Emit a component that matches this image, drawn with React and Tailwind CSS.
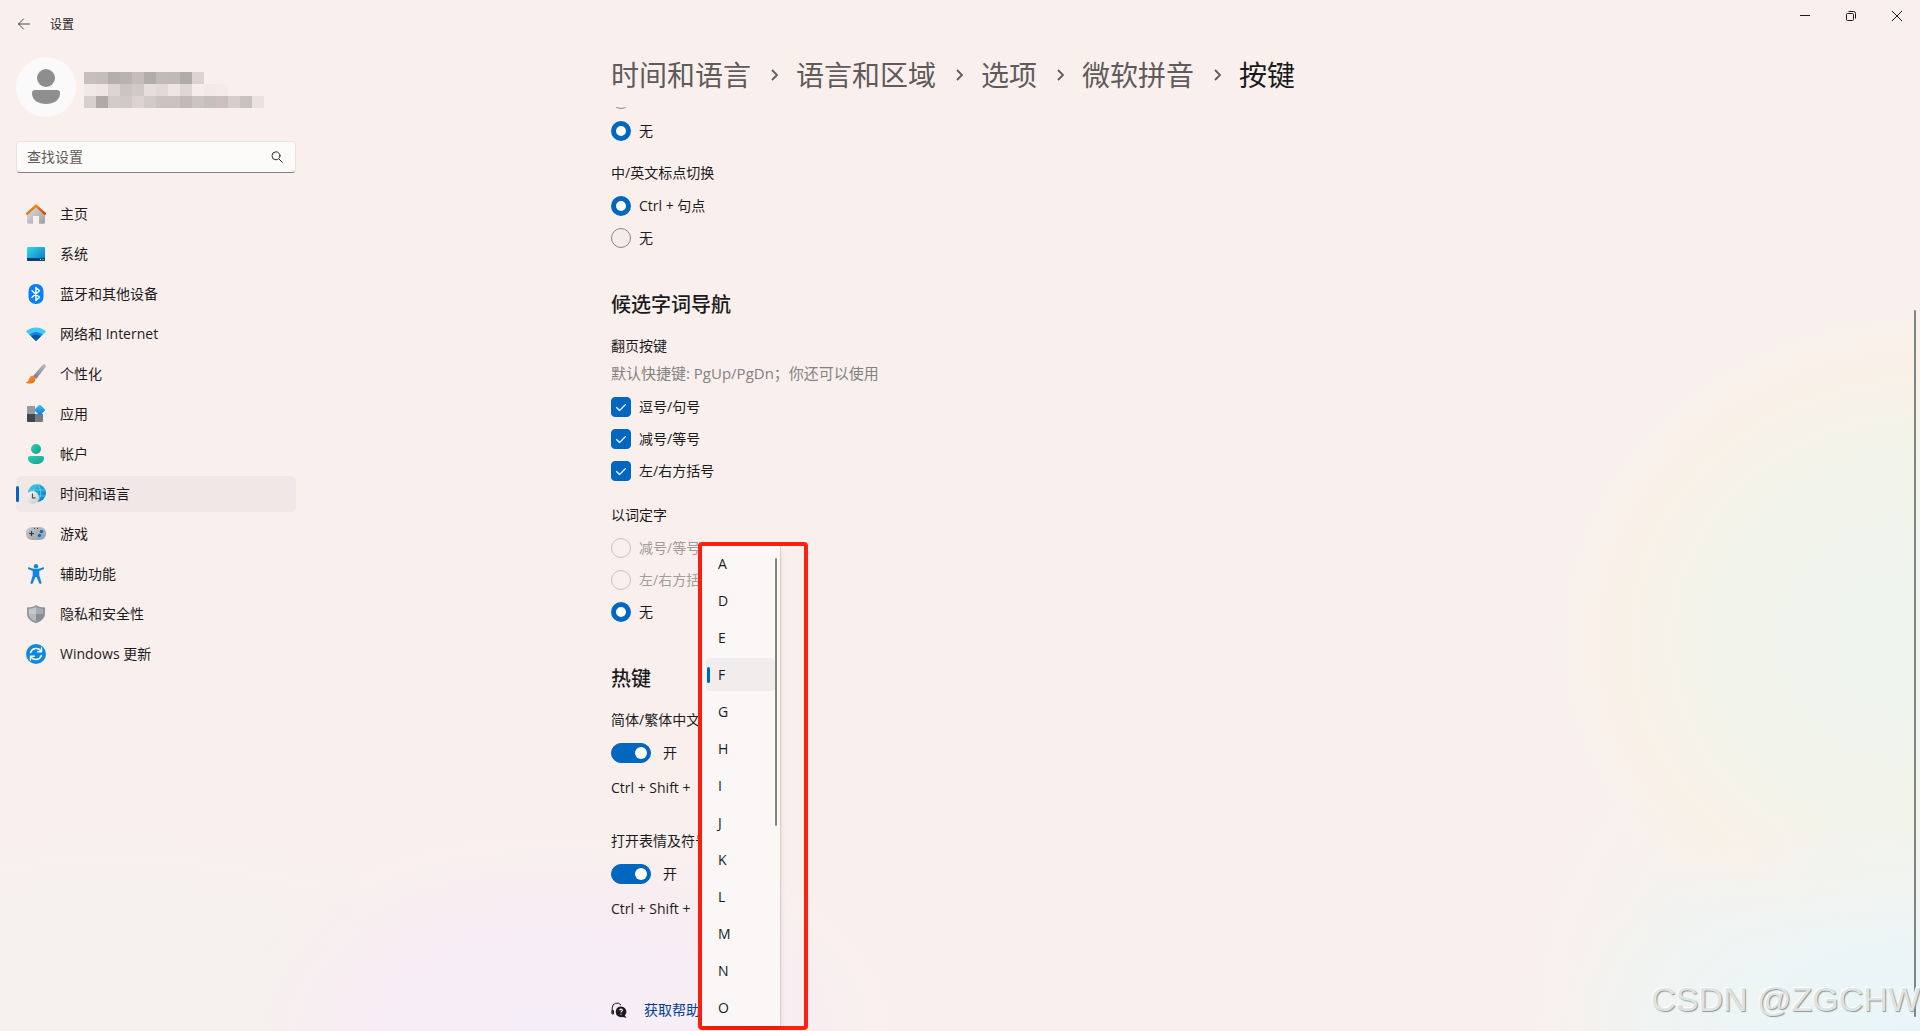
import clsx from 'clsx';

const crumbs = ['时间和语言', '语言和区域', '选项', '微软拼音'];
const keys = ['A', 'D', 'E', 'F', 'G', 'H', 'I', 'J', 'K', 'L', 'M', 'N', 'O'];

// blurred account name and mail, one row of tiles per line
const nameTiles = [
  ['#c8bebf', '#c5bcbc', '#b3afae', '#b8b3b1', '#c6bcbc', '#b1adab', '#c0bab8', '#bfb9b7', '#b0acaa', '#dcd2d2'],
  ['#f1e8e8', '#f0e5e5', '#ddd4d3', '#cbc4c3', '#d1c8c8', '#e7dddd', '#e3d9d9', '#efe4e4', '#e0d6d6', '#f6ecec', '#f3e9e9', '#f5ebeb'],
  ['#d8d0cf', '#afa9a7', '#d3caca', '#d1c8c8', '#dcd2d2', '#d2c9c9', '#ccc2c2', '#ccc2c2', '#c3b9b9', '#ccc4c3', '#c5c0be', '#cac0c0', '#d7cdcd', '#c7c1bf', '#ebe1e1'],
];

const HomeIcon = () => (
  <svg viewBox="0 0 20 20" className="w-5 h-5">
    <defs>
      <linearGradient id="homeBody" x1="0" y1="0" x2="1" y2="1"><stop stopColor="#e2e2e2" /><stop offset="1" stopColor="#9d9fa1" /></linearGradient>
      <linearGradient id="homeRoof" x1="0" y1="0" x2="1" y2="1"><stop stopColor="#f9a01b" /><stop offset="1" stopColor="#c9430c" /></linearGradient>
    </defs>
    <path d="M1 9 10 1.5 19 9v9.3c0 .9-.6 1.5-1.4 1.5H13V12H7v7.8H2.4c-.8 0-1.4-.6-1.4-1.5Z" fill="url(#homeBody)" />
    <path d="m1.2 9.6 8.8-8 8.8 8" fill="none" stroke="url(#homeRoof)" strokeWidth="2.4" strokeLinecap="round" strokeLinejoin="round" />
  </svg>
);

const SystemIcon = () => (
  <svg viewBox="0 0 20 20" className="w-5 h-5">
    <defs>
      <linearGradient id="screen" x1="0" y1="0" x2="1" y2="1"><stop stopColor="#35dbe9" /><stop offset="1" stopColor="#0a72c4" /></linearGradient>
    </defs>
    <rect x="1" y="3" width="18" height="14" rx="1" fill="url(#screen)" />
    <path d="M1 14h18v2a1 1 0 0 1-1 1H2a1 1 0 0 1-1-1Z" fill="#0b4468" />
    <path d="M14 15h1v1h-1zM16.5 15h1v1h-1z" fill="#b9dced" />
  </svg>
);

const BluetoothIcon = () => (
  <svg viewBox="0 0 20 20" className="w-5 h-5">
    <rect x="2.5" width="15" height="20" rx="7" fill="#0781fb" />
    <path d="m6 6.8 7.5 6.4-3.6 3.300v-13l3.600 3.300L6 13.200" fill="none" stroke="#fff" strokeWidth="1.4" strokeLinejoin="round" strokeLinecap="round" />
  </svg>
);

const NetworkIcon = () => (
  <svg viewBox="0 0 20 20" className="w-5 h-5">
    <path d="M10 17 0 7.500a14.500 14.500 0 0 1 20 0Z" fill="#3ccbf4" />
    <path d="M10 17 3.300 10.600a10 10 0 0 1 13.400 0Z" fill="#1683e0" />
    <path d="M10 17 5.200 12.400a7 7 0 0 1 9.600 0Z" fill="#0b55a4" />
  </svg>
);

const BrushIcon = () => (
  <svg viewBox="0 0 20 20" className="w-5 h-5">
    <defs>
      <linearGradient id="handle" x1="1" y1="0" x2="0" y2="1"><stop stopColor="#b9bec4" /><stop offset="1" stopColor="#737b84" /></linearGradient>
      <linearGradient id="bristle" x1="0" y1="0" x2="1" y2="1"><stop stopColor="#fca92d" /><stop offset="1" stopColor="#e85d13" /></linearGradient>
    </defs>
    <path d="M7 12 16.800.8c1.800-1.500 3.800.2 2.800 2.200L10.300 15Z" fill="url(#handle)" />
    <path d="M4.500 12.500c2-2 5.700.3 4.800 3.400C8.300 19.600 3.600 20.400.5 18.900c-.6-.3-.5-.8 0-.9C3 17.500 2.600 14.200 4.500 12.500Z" fill="url(#bristle)" />
  </svg>
);

const AppsIcon = () => (
  <svg viewBox="0 0 20 20" className="w-5 h-5">
    <defs>
      <linearGradient id="diamond" x1="0" y1="0" x2="1" y2="1"><stop stopColor="#3cc4f3" /><stop offset="1" stopColor="#0b78d0" /></linearGradient>
    </defs>
    <path d="M2 2h7v8H1V3a1 1 0 0 1 1-1Z" fill="#959ba3" />
    <path d="M1 10h8v8H2a1 1 0 0 1-1-1Z" fill="#43474c" />
    <path d="M9 10h8v7a1 1 0 0 1-1 1H9Z" fill="#747a82" />
    <rect x="9.8" y="2" width="8" height="8" rx="1" transform="rotate(45 13.8 6)" fill="url(#diamond)" />
  </svg>
);

const AccountIcon = () => (
  <svg viewBox="0 0 20 20" className="w-5 h-5">
    <defs>
      <linearGradient id="person" x1="0" y1="0" x2="1" y2="1"><stop stopColor="#2bcdb2" /><stop offset="1" stopColor="#12a38e" /></linearGradient>
    </defs>
    <circle cx="10" cy="5" r="5" fill="url(#person)" />
    <path d="M4 12h12a2 2 0 0 1 2 2c0 4-3.500 6-8 6s-8-2-8-6a2 2 0 0 1 2-2Z" fill="url(#person)" />
  </svg>
);

const TimeIcon = () => (
  <svg viewBox="0 0 20 20" className="w-5 h-5">
    <defs>
      <linearGradient id="globe" x1="0" y1="0" x2="1" y2="1"><stop stopColor="#35d0e6" /><stop offset="1" stopColor="#0a73be" /></linearGradient>
      <linearGradient id="clock" x1="0" y1="0" x2="1" y2="1"><stop stopColor="#fafafa" /><stop offset="1" stopColor="#c6c8ca" /></linearGradient>
    </defs>
    <circle cx="11" cy="9" r="9" fill="url(#globe)" />
    <path d="M2.600 6h16.800M2.600 12h16.800M11 0c-5 5-5 13 0 18M11 0c5 5 5 13 0 18" fill="none" stroke="#6fdcf0" strokeWidth=".7" />
    <circle cx="6.5" cy="13.5" r="6.5" fill="url(#clock)" />
    <path d="M6.500 9.500v4.300h3" fill="none" stroke="#4c5156" strokeWidth="1.2" />
  </svg>
);

const GameIcon = () => (
  <svg viewBox="0 0 20 20" className="w-5 h-5">
    <defs>
      <linearGradient id="pad" x1="0" y1="0" x2="1" y2="1"><stop stopColor="#c4c8cd" /><stop offset="1" stopColor="#989ea6" /></linearGradient>
    </defs>
    <rect y="3" width="20" height="13" rx="6" fill="url(#pad)" />
    <path d="M5.500 7v5M3 9.500h5" stroke="#34383d" strokeWidth="1.2" />
    <path d="M8 4h1v1H8zM11 4h1v1h-1z" fill="#34383d" />
    <circle cx="15.5" cy="7.5" r="1.7" fill="#0b6cc4" />
    <circle cx="13.5" cy="11.5" r="1.7" fill="#0b6cc4" />
  </svg>
);

const AccessIcon = () => (
  <svg viewBox="0 0 20 20" className="w-5 h-5" fill="#1286dd">
    <circle cx="10" cy="2.2" r="2.2" />
    <path d="M3.200 3.200c2 .9 4.300 1.700 6.800 1.700s4.800-.8 6.800-1.700c1.200-.4 1.800 1.400.7 2l-4.200 1.900v4.400l2.200 6.900c.4 1.500-1.700 2.200-2.300.8L10.500 13h-1l-2.700 6.200c-.6 1.400-2.700.7-2.300-.8l2.200-6.900V7.100L2.500 5.200c-1.100-.6-.5-2.400.7-2Z" />
  </svg>
);

const ShieldIcon = () => (
  <svg viewBox="0 0 20 20" className="w-5 h-5">
    <path d="M10 1c2.500 1.800 5.500 2.400 9 2.500v6c0 5-4 8-9 9.800-5-1.800-9-4.800-9-9.800v-6C4.500 3.400 7.500 2.800 10 1Z" fill="#8b9197" />
    <path d="M10 2.800v7.200H2.600V4.900C5.300 4.800 7.800 4.200 10 2.800Z" fill="#c3c8cb" />
    <path d="M10 2.800v7.200h7.400V4.900C14.700 4.800 12.200 4.200 10 2.800Z" fill="#a5abb0" />
    <path d="M2.600 10H10v7.700c-4.200-1.600-7.200-4-7.400-7.700Z" fill="#b2b8bc" />
    <path d="M17.400 10H10v7.700c4.200-1.600 7.200-4 7.400-7.700Z" fill="#868d94" />
  </svg>
);

const UpdateIcon = () => (
  <svg viewBox="0 0 20 20" className="w-5 h-5">
    <circle cx="10" cy="10" r="10" fill="#0f88de" />
    <path d="M4.600 8.500A5.800 5.800 0 0 1 15 7.200M15.400 11.500A5.800 5.800 0 0 1 5 12.800" fill="none" stroke="#fff" strokeWidth="1.5" strokeLinecap="round" />
    <path d="M15.500 4v3.700h-3.700M4.500 16v-3.700h3.700" fill="none" stroke="#fff" strokeWidth="1.5" strokeLinecap="round" strokeLinejoin="round" />
  </svg>
);

const HelpIcon = () => (
  <svg viewBox="0 0 16 16" className="w-4 h-4">
    <path d="M1.200 11.500V6a4.800 4.800 0 0 1 8.800-2.800M1 8.500h1.500v3.500H1z" fill="none" stroke="#1b1b1b" strokeWidth="1" />
    <path d="M10 4.500a5.300 5.300 0 1 1-2.400 10 5.300 5.300 0 0 1 2.400-10Zm3.500 8.500 2 2.700-4-.7Z" fill="#1b1b1b" />
    <path d="M8.600 8.400c.2-1.800 2.800-1.700 2.800-.1 0 1-1.400 1.100-1.400 2.200M10 11.700v1" fill="none" stroke="#fff" strokeWidth="1.1" />
  </svg>
);

const menu = [
  { label: '主页', Icon: HomeIcon },
  { label: '系统', Icon: SystemIcon },
  { label: '蓝牙和其他设备', Icon: BluetoothIcon },
  { label: '网络和 Internet', Icon: NetworkIcon },
  { label: '个性化', Icon: BrushIcon },
  { label: '应用', Icon: AppsIcon },
  { label: '帐户', Icon: AccountIcon },
  { label: '时间和语言', Icon: TimeIcon, active: true },
  { label: '游戏', Icon: GameIcon },
  { label: '辅助功能', Icon: AccessIcon },
  { label: '隐私和安全性', Icon: ShieldIcon },
  { label: 'Windows 更新', Icon: UpdateIcon },
];

const Radio = ({ name, label, checked, disabled }) => (
  <label className={clsx('flex items-center gap-2 h-8', disabled && 'text-[#a19b9a]')}>
    <input
      type="radio"
      name={name}
      defaultChecked={checked}
      disabled={disabled}
      className="appearance-none w-5 h-5 rounded-full border border-[#8b8786] bg-[#f3ecea] disabled:border-[#c9c2c1] disabled:bg-transparent checked:border-[5px] checked:border-[#0067c0] checked:bg-white"
    />
    {label}
  </label>
);

const Check = ({ label }) => (
  <label className="flex items-center gap-2 h-8">
    <span className="relative w-5 h-5">
      <input type="checkbox" defaultChecked className="block appearance-none w-5 h-5 rounded border border-[#8b8786] checked:bg-[#0067c0] checked:border-[#0067c0]" />
      <svg viewBox="0 0 20 20" className="absolute inset-0 w-5 h-5 pointer-events-none">
        <path d="m5.500 10.500 3 3 6-6" fill="none" stroke="#fff" strokeWidth="1.2" strokeLinecap="round" strokeLinejoin="round" />
      </svg>
    </span>
    {label}
  </label>
);

const Hotkey = ({ title, id }) => (
  <div>
    <label htmlFor={id} className="block leading-5">{title}</label>
    <div className="flex items-center gap-3 h-5 mt-[13px]">
      <span className="relative w-10 h-5">
        <input id={id} type="checkbox" role="switch" defaultChecked className="peer block appearance-none w-10 h-5 rounded-full border border-[#8b8786] checked:bg-[#0067c0] checked:border-[#0067c0]" />
        <span className="absolute top-1 left-1 w-3 h-3 rounded-full bg-white pointer-events-none peer-checked:left-6" />
      </span>
      <span>开</span>
    </div>
    <p className="leading-5 mt-[15px]">Ctrl + Shift +</p>
  </div>
);

const KeyMenu = () => (
  <div className="absolute left-[87px] top-0 bottom-0 w-[110px] rounded border-4 border-[#ff2010]">
    <div className="relative h-full w-[79px] bg-[#faf7f6] border-r border-[#d5cfce] shadow-md overflow-hidden">
      <ul role="listbox" aria-label="按键" className="flex flex-col gap-1 pt-px pl-1 pr-[5px]">
        {keys.map((key) => (
          <li
            key={key}
            role="option"
            aria-selected={key === 'F'}
            className={clsx('relative flex items-center h-[33px] pl-3 rounded', key === 'F' && 'bg-[#f0edec]')}
          >
            {key === 'F' && <span className="absolute left-px w-[3px] h-4 rounded-full bg-[#0067c0]" />}
            {key}
          </li>
        ))}
      </ul>
      <span className="absolute right-[3px] top-3 w-[2px] h-[268px] rounded-full bg-[#868382]" />
    </div>
  </div>
);

const Sidebar = () => (
  <aside className="w-[312px] shrink-0 px-4">
    <div className="flex items-center pt-2 h-[70px]">
      <span className="flex items-center justify-center w-[60px] h-[60px] rounded-full bg-[#fbfafa] shrink-0">
        <svg viewBox="0 0 30 36" className="w-[30px] h-9" fill="#8e8e8e">
          <circle cx="15" cy="9" r="9" />
          <path d="M4 21h22a3 3 0 0 1 3 3c0 7-6 11-14 11S1 31 1 24a3 3 0 0 1 3-3Z" />
        </svg>
      </span>
      <div className="ml-2 mt-[6px]">
        {nameTiles.map((row, i) => (
          <div key={i} className="flex">
            {row.map((color, j) => (
              <span key={j} className="w-3 h-3" style={{ backgroundColor: color }} />
            ))}
          </div>
        ))}
      </div>
    </div>

    <div className="relative mt-[23px]">
      <input
        type="text"
        aria-label="查找设置"
        placeholder="查找设置"
        className="block w-[280px] h-8 px-[10px] pb-[2px] rounded border border-[#eae2e1] border-b-[#868180] bg-[#fdfbf9] placeholder:text-[#5f5c5b] outline-none"
      />
      <svg viewBox="0 0 12 12" className="absolute right-[13px] top-[10px] w-3 h-3" fill="none" stroke="#2f2d2d" strokeLinecap="round">
        <circle cx="5" cy="4.8" r="4" />
        <path d="m8 8 3.500 3.500" />
      </svg>
    </div>

    <nav className="flex flex-col gap-1 mt-[23px]">
      {menu.map(({ label, Icon, active }) => (
        <a
          key={label}
          href="#"
          className={clsx('relative flex items-center gap-[14px] h-9 pl-[10px] rounded-md', active && 'bg-[#f0e7e6]')}
        >
          {active && <span className="absolute left-0 w-[3px] h-4 rounded-full bg-[#0067c0]" />}
          <Icon />
          {label}
        </a>
      ))}
    </nav>
  </aside>
);

const App = () => {
  return (
    <div className="relative flex flex-col h-screen overflow-hidden text-sm text-[#1b1b1b] font-['Open_Sans','Noto_Sans_CJK_SC',sans-serif] bg-[#f9f0ee] bg-[radial-gradient(ellipse_340px_200px_at_29%_100%,#f5eef8_0%,#f8edf3_60%,#f9f0ee00_100%),radial-gradient(ellipse_420px_200px_at_6%_100%,#f5f2ee_0%,#f5f1ed_60%,#f9f0ee00_100%),radial-gradient(ellipse_380px_220px_at_100%_100%,#e8f5f8_0%,#ecf5f6_40%,#f3f3f000_100%),radial-gradient(ellipse_380px_340px_at_100%_62%,#eef5ed_0%,#f3f3ea_60%,#f9f1e8_80%,#f9f0ee00_100%),radial-gradient(ellipse_400px_400px_at_100%_100%,#f2f3f1_0%,#f4f2ee_70%,#f9f0ee00_100%)]">
      <header className="flex justify-between h-12 shrink-0">
        <div className="flex items-center gap-5 pl-[18px] text-xs">
          <button type="button" aria-label="返回">
            <svg viewBox="0 0 12 12" className="w-3 h-3" fill="none" stroke="#4a4746" strokeLinecap="round" strokeLinejoin="round">
              <path d="M11.500 6H.5M5.500 1l-5 5 5 5" />
            </svg>
          </button>
          <span className="pt-[2px]">设置</span>
        </div>
        <div className="flex h-8 text-[#1b1b1b]">
          <button type="button" aria-label="最小化" className="flex items-center justify-center w-[46px]">
            <svg viewBox="0 0 10 10" className="w-[10px] h-[10px]" stroke="currentColor"><path d="M0 4.500h10" /></svg>
          </button>
          <button type="button" aria-label="还原" className="flex items-center justify-center w-[46px]">
            <svg viewBox="0 0 10 10" className="w-[10px] h-[10px]" fill="none" stroke="currentColor">
              <rect x=".5" y="2.5" width="7" height="7" rx="1" />
              <path d="M2.500.5h5a2 2 0 0 1 2 2v5" />
            </svg>
          </button>
          <button type="button" aria-label="关闭" className="flex items-center justify-center w-[46px]">
            <svg viewBox="0 0 10 10" className="w-[10px] h-[10px]" stroke="currentColor"><path d="m0 0 10 10M10 0 0 10" /></svg>
          </button>
        </div>
      </header>

      <div className="flex flex-1 min-h-0">
        <Sidebar />

        <main className="flex flex-col flex-1 min-w-0">
          <h1 className="flex items-center gap-[15px] w-full max-w-[1000px] mx-auto h-[59px] shrink-0 text-[28px] leading-9 pb-[6px]">
            {crumbs.map((crumb) => (
              <span key={crumb} className="flex items-center gap-4">
                <a href="#" className="text-[#5f5b5a]">{crumb}</a>
                <svg viewBox="0 0 14 14" className="w-[14px] h-[14px]" fill="none" stroke="#5f5b5a" strokeWidth="1.8">
                  <path d="m5 2 5 5-5 5" />
                </svg>
              </span>
            ))}
            <span>按键</span>
          </h1>

          <div className="flex-1 min-h-0 w-full overflow-hidden">
            <div className="relative w-full max-w-[1000px] mx-auto">
              {/* list is scrolled, first option is cut by the header */}
              <div className="-mt-6">
                <Radio name="mode" label="" />
                <Radio name="mode" label="无" checked />
              </div>

              <h3 className="leading-5 mt-4 mb-[7px]">中/英文标点切换</h3>
              <Radio name="punct" label="Ctrl + 句点" checked />
              <Radio name="punct" label="无" />

              <h2 className="text-xl leading-7 font-medium mt-[37px]">候选字词导航</h2>
              <h3 className="leading-5 mt-[17px]">翻页按键</h3>
              <p className="text-[15px] leading-5 mt-[7px] mb-2 text-[#858080]">默认快捷键: PgUp/PgDn；你还可以使用</p>
              <Check label="逗号/句号" />
              <Check label="减号/等号" />
              <Check label="左/右方括号" />

              <h3 className="leading-5 mt-[18px] mb-[7px]">以词定字</h3>
              <Radio name="word" label="减号/等号" disabled />
              <Radio name="word" label="左/右方括号" disabled />
              <Radio name="word" label="无" checked />

              <h2 className="text-xl leading-7 font-medium mt-[37px] mb-[17px]">热键</h2>
              <Hotkey id="hk-trad" title="简体/繁体中文" />
              <div className="h-[33px]" />
              <Hotkey id="hk-emoji" title="打开表情及符号" />

              <div className="flex items-center gap-[17px] h-6 mt-[79px]">
                <HelpIcon />
                <a href="#" className="text-[#003e92]">获取帮助</a>
              </div>

              <div className="absolute inset-x-0 top-[459px] h-[488px]">
                <KeyMenu />
              </div>
            </div>
          </div>
        </main>

        <div className="flex flex-col justify-end items-center w-[10px] shrink-0 pb-[14px]">
          <span className="w-[2px] h-[73%] rounded-full bg-[#7f8584]" />
        </div>
      </div>

      <span className="absolute right-0 bottom-3 text-[34px] leading-10 whitespace-nowrap text-[#dfe3e3] font-['Liberation_Sans',sans-serif] [text-shadow:1px_1px_1px_#8f9595,-1px_-1px_0_#ffffff]">CSDN @ZGCHW</span>
    </div>
  );
};

export default App;
